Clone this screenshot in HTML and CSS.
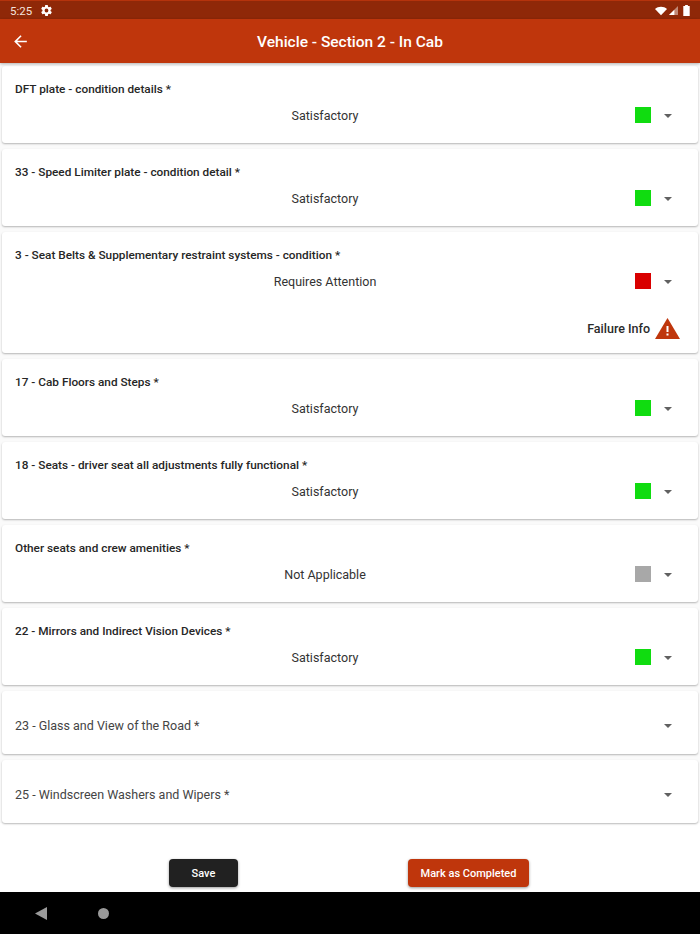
FILE: index.html
```html
<!DOCTYPE html>
<html lang="en">
<head>
<meta charset="utf-8">
<title>Vehicle - Section 2 - In Cab</title>
<link rel="stylesheet" href="styles.css">
</head>
<body>
<div class="screen">
  <div class="status">
    <div class="status-left">
      <span class="time">5:25</span>
      <svg class="gear" viewBox="0 0 24 24"><path fill="#fff" d="M19.4 13c.04-.32.1-.66.1-1s-.06-.68-.1-1l2.1-1.65c.2-.15.25-.42.12-.64l-2-3.46c-.12-.22-.38-.3-.6-.22l-2.5 1c-.52-.4-1.08-.73-1.7-.98l-.37-2.65A.49.49 0 0 0 14 2h-4c-.25 0-.46.18-.5.42l-.37 2.65c-.62.25-1.18.58-1.7.98l-2.5-1c-.22-.08-.48 0-.6.22l-2 3.46c-.13.22-.07.49.12.64L4.6 11c-.04.32-.1.66-.1 1s.06.68.1 1l-2.1 1.65c-.2.15-.25.42-.12.64l2 3.46c.12.22.38.3.6.22l2.5-1c.52.4 1.08.73 1.7.98l.37 2.65c.04.24.25.42.5.42h4c.25 0 .46-.18.5-.42l.37-2.65c.62-.25 1.18-.58 1.7-.98l2.5 1c.22.08.48 0 .6-.22l2-3.46c.13-.22.07-.49-.12-.64L19.4 13zM12 15.5a3.5 3.5 0 1 1 0-7 3.5 3.5 0 0 1 0 7z"/></svg>
    </div>
    <div class="status-right">
      <svg class="wifi" viewBox="0 0 14 10"><path fill="#fff" d="M0 2.6C1.9 1 4.3 0 7 0s5.100 1 7 2.600L7 10z"/></svg>
      <svg class="signal" viewBox="0 0 10 10"><path fill="#fff" fill-opacity=".45" d="M10 0v10H0z"/><path fill="#fff" d="M6 4.200V10H0z"/></svg>
      <svg class="battery" viewBox="0 0 7 12"><path fill="#fff" d="M2 0h3v1h2v11H0V1h2z"/></svg>
    </div>
  </div>
  <header class="appbar">
    <svg class="back" viewBox="0 0 24 24"><path fill="#fff" d="M20 11H7.830l5.590-5.590L12 4l-8 8 8 8 1.410-1.410L7.830 13H20z"/></svg>
    <h1 class="title">Vehicle - Section 2 - In Cab</h1>
  </header>
  <main class="list">
    <section class="card">
      <div class="label">DFT plate - condition details *</div>
      <div class="row"><span class="value">Satisfactory</span><span class="swatch green"></span><span class="caret"></span></div>
    </section>
    <section class="card">
      <div class="label">33 - Speed Limiter plate - condition detail *</div>
      <div class="row"><span class="value">Satisfactory</span><span class="swatch green"></span><span class="caret"></span></div>
    </section>
    <section class="card card-failed">
      <div class="label">3 - Seat Belts &amp; Supplementary restraint systems - condition *</div>
      <div class="row"><span class="value">Requires Attention</span><span class="swatch red"></span><span class="caret"></span></div>
      <div class="failure">
        <span class="failure-text">Failure Info</span>
        <svg class="warn" viewBox="0 0 25 21"><path fill="#bf360c" d="M12.500 0 25 21H0z"/><path fill="#fff" d="M11.500 8h2v6h-2zM11.500 15.500h2v2h-2z"/></svg>
      </div>
    </section>
    <section class="card">
      <div class="label">17 - Cab Floors and Steps *</div>
      <div class="row"><span class="value">Satisfactory</span><span class="swatch green"></span><span class="caret"></span></div>
    </section>
    <section class="card">
      <div class="label">18 - Seats - driver seat all adjustments fully functional *</div>
      <div class="row"><span class="value">Satisfactory</span><span class="swatch green"></span><span class="caret"></span></div>
    </section>
    <section class="card">
      <div class="label">Other seats and crew amenities *</div>
      <div class="row"><span class="value">Not Applicable</span><span class="swatch grey"></span><span class="caret"></span></div>
    </section>
    <section class="card">
      <div class="label">22 - Mirrors and Indirect Vision Devices *</div>
      <div class="row"><span class="value">Satisfactory</span><span class="swatch green"></span><span class="caret"></span></div>
    </section>
    <section class="card card-empty">
      <span class="placeholder">23 - Glass and View of the Road *</span><span class="caret"></span>
    </section>
    <section class="card card-empty">
      <span class="placeholder">25 - Windscreen Washers and Wipers *</span><span class="caret"></span>
    </section>
  </main>
  <footer class="actions">
    <button class="btn btn-save">Save</button>
    <button class="btn btn-complete">Mark as Completed</button>
  </footer>
  <nav class="navbar">
    <svg class="nav-back" viewBox="0 0 12 13"><path fill="#9a9a9a" d="M12 0v13L0 6.500z"/></svg>
    <span class="nav-home"></span>
  </nav>
</div>
</body>
</html>
```
FILE: styles.css
```css
* { box-sizing: border-box; }
html, body { margin: 0; padding: 0; }
body { font-family: Roboto, "Liberation Sans", sans-serif; background: #fff; }
.screen { width: 700px; height: 934px; display: flex; flex-direction: column; overflow: hidden; background: #fff; }

.status { height: 19px; flex: none; background: #8f2808; border-top: 1px solid #b5330c; display: flex; align-items: center; justify-content: space-between; padding: 1px 10px 0 10px; }
.status-left, .status-right { display: flex; align-items: center; }
.time { color: #f3e3dd; font-size: 11.500px; }
.gear { width: 13px; height: 13px; margin-left: 8px; }
.wifi { width: 12px; height: 10px; }
.signal { width: 9px; height: 9px; margin-left: 2px; }
.battery { width: 7px; height: 11px; margin-left: 5px; }

.appbar { height: 44px; flex: none; background: #bf360c; display: flex; align-items: center; position: relative; box-shadow: 0 1px 3px rgba(0,0,0,.3); z-index: 1; }
.back { width: 19px; height: 19px; margin-left: 11px; margin-top: 1px; }
.title { position: absolute; left: 0; right: 0; top: 1px; margin: 0; text-align: center; color: #fff; font-size: 15.500px; font-weight: 500; line-height: 44px; }

.list { flex: 1; display: flex; flex-direction: column; gap: 6px; padding: 3px 2px 0; background: linear-gradient(#fafafa 760px, #fff 760px); }
.card { background: #fff; border-radius: 3px; box-shadow: 0 1px 2px rgba(0,0,0,.28); padding: 14px 13px 0; height: 77px; flex: none; }
.card-failed { height: 121px; }
.label { font-size: 11.800px; font-weight: 500; line-height: 18px; color: #262626; }
.row { display: flex; align-items: center; height: 18px; margin-top: 8px; position: relative; }
.value { position: absolute; left: 0; width: 620px; text-align: center; font-size: 12.500px; color: #333; }
.swatch { width: 16px; height: 16px; margin-left: auto; margin-right: 13px; flex: none; }
.green { background: #10dc10; }
.red { background: #d90000; }
.grey { background: #a8a8a8; }
.caret { width: 0; height: 0; border-left: 4px solid transparent; border-right: 4px solid transparent; border-top: 4px solid #616161; margin-right: 13px; margin-top: 1px; flex: none; }

.failure { display: flex; align-items: center; justify-content: flex-end; height: 24px; margin-top: 26px; padding-right: 5px; }
.failure-text { font-size: 12.500px; font-weight: 500; color: #2b2b2b; }
.warn { width: 25px; height: 21px; margin-left: 5px; }

.card-empty { height: 63px; padding: 6px 0 0 13px; display: flex; align-items: center; justify-content: space-between; }
.card-empty .caret { margin-right: 26px; }
.placeholder { font-size: 12.500px; color: #444; }

.actions { height: 69px; flex: none; display: flex; }
.btn { height: 28px; border: 0; border-radius: 4px; color: #fff; font-family: inherit; font-size: 11px; font-weight: 500; box-shadow: 0 1px 3px rgba(0,0,0,.4); padding: 0; margin-top: 36px; }
.btn-save { width: 69px; background: #212121; margin-left: 169px; }
.btn-complete { width: 121px; background: #bf360c; margin-left: 170px; }

.navbar { height: 42px; flex: none; background: #000; display: flex; align-items: center; }
.nav-back { width: 12px; height: 13px; margin-left: 35px; }
.nav-home { width: 11px; height: 11px; border-radius: 50%; background: #9a9a9a; margin-left: 51px; }
```
